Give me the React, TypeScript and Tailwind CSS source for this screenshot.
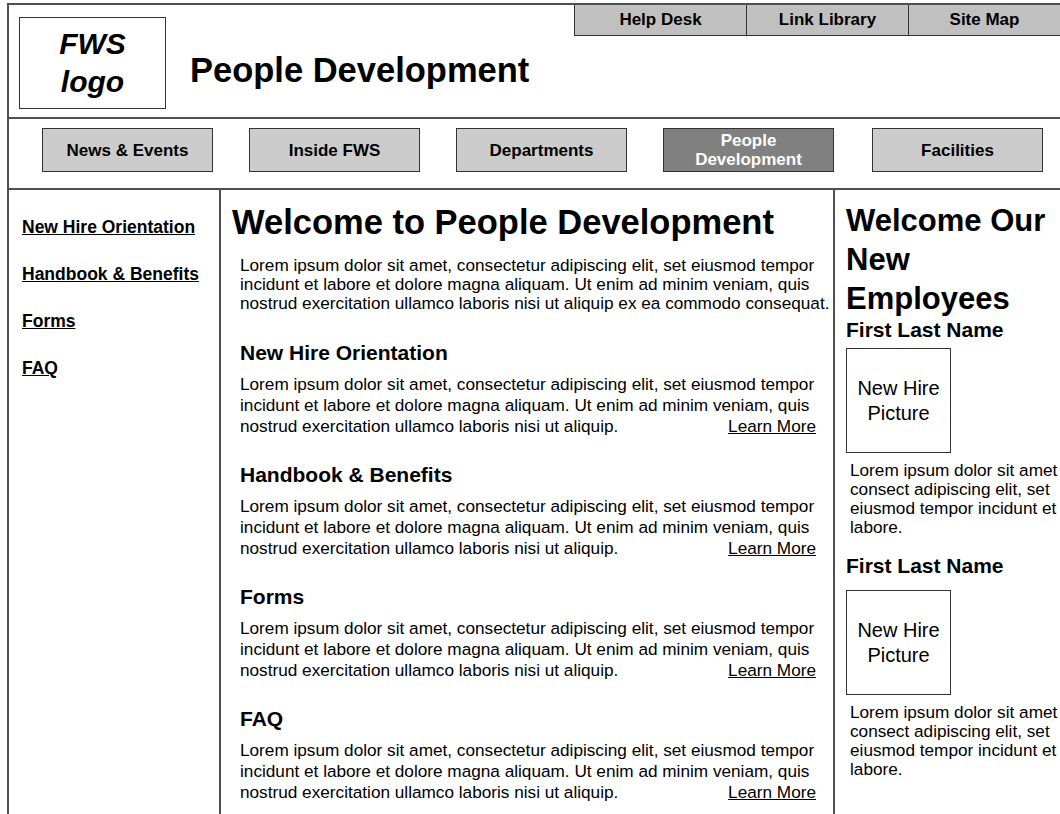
import React from 'react';

const topLinks = [
  { label: 'Help Desk', w: 'w-[171px]' },
  { label: 'Link Library', w: 'w-[162px]' },
  { label: 'Site Map', w: 'flex-1' },
];

const navItems = ['News & Events', 'Inside FWS', 'Departments', 'People Development', 'Facilities'];

const sideLinks = ['New Hire Orientation', 'Handbook & Benefits', 'Forms', 'FAQ'];

const sections = ['New Hire Orientation', 'Handbook & Benefits', 'Forms', 'FAQ'];

const lorem = [
  'Lorem ipsum dolor sit amet, consectetur adipiscing elit, set eiusmod tempor',
  'incidunt et labore et dolore magna aliquam. Ut enim ad minim veniam, quis',
];

const NewHire = ({ first }: { first?: boolean }) => (
  <div className={first ? '' : 'mt-[17px]'}>
    <h3 className="text-[21px] font-bold leading-[24px]">First Last Name</h3>
    <div
      className={`${first ? 'mt-[6px]' : 'mt-[12px]'} flex h-[105px] w-[105px] items-center justify-center border border-[#333] text-center text-[20px] leading-[25px]`}
    >
      New Hire
      <br />
      Picture
    </div>
    <p className="mt-[8px] whitespace-nowrap pl-[4px] text-[17.2px] leading-[19px]">
      Lorem ipsum dolor sit amet
      <br />
      consect adipiscing elit, set
      <br />
      eiusmod tempor incidunt et
      <br />
      labore.
    </p>
  </div>
);

export default function App() {
  return (
    <div className="min-h-screen overflow-hidden bg-white font-['Liberation_Sans',Arial,sans-serif] text-black">
      <div className="ml-[7px] mt-[3px] border-l-2 border-t-2 border-[#505050]">
        {/* header: logo, site title, utility tabs */}
        <header className="flex h-[114px] items-start border-b-2 border-[#505050]">
          <div className="ml-[10px] mt-[12px] flex h-[92px] w-[147px] shrink-0 items-center justify-center border border-[#333] text-center text-[30px] font-bold italic leading-[38px]">
            FWS
            <br />
            logo
          </div>
          <h1 className="ml-[24px] mt-[45px] whitespace-nowrap text-[34.5px] font-bold leading-[40px]">
            People Development
          </h1>
          <div className="ml-auto flex h-[31px] w-[486px] border-b border-l border-[#333] bg-[#c0c0c0]">
            {topLinks.map((t, i) => (
              <div
                key={t.label}
                className={`${t.w} flex items-center justify-center text-[17px] font-bold ${i > 0 ? 'border-l border-[#333]' : ''}`}
              >
                {t.label}
              </div>
            ))}
          </div>
        </header>

        {/* main navigation */}
        <nav className="flex h-[71px] gap-[36px] border-b-2 border-[#505050] pl-[33px] pt-[9px]">
          {navItems.map((n) => {
            const active = n === 'People Development';
            return (
              <div
                key={n}
                className={`flex h-[44px] w-[171px] items-center justify-center border border-[#333] text-center text-[17px] font-bold leading-[19px] ${
                  active ? 'bg-[#808080] px-[40px] text-white' : 'bg-[#cccccc]'
                } ${n === 'Facilities' ? 'ml-[2px]' : ''}`}
              >
                {n}
              </div>
            );
          })}
        </nav>

        <div className="flex">
          {/* left rail */}
          <aside className="min-h-[640px] w-[212px] shrink-0 border-r-2 border-[#505050] pl-[13px] pt-[26px]">
            <ul className="flex flex-col gap-[23px]">
              {sideLinks.map((l) => (
                <li key={l}>
                  <a className="whitespace-nowrap text-[17.5px] font-bold leading-[20px] underline">{l}</a>
                </li>
              ))}
            </ul>
          </aside>

          {/* content */}
          <main className="w-[614px] shrink-0 border-r-2 border-[#505050] pt-[12px]">
            <h2 className="whitespace-nowrap pl-[11px] text-[34.5px] font-bold leading-[40px]">
              Welcome to People Development
            </h2>
            <p className="mt-[14px] whitespace-nowrap pl-[19px] text-[17.2px] leading-[19px]">
              {lorem[0]}
              <br />
              {lorem[1]}
              <br />
              nostrud exercitation ullamco laboris nisi ut aliquip ex ea commodo consequat.
            </p>
            <div className="mt-[27px] flex flex-col gap-[25px] pl-[19px]">
              {sections.map((s) => (
                <section key={s}>
                  <h3 className="text-[21px] font-bold leading-[26px]">{s}</h3>
                  <div className="mt-[8px] w-[576px] whitespace-nowrap text-[17.2px] leading-[21px]">
                    <div>{lorem[0]}</div>
                    <div>{lorem[1]}</div>
                    <div className="flex justify-between">
                      <span>nostrud exercitation ullamco laboris nisi ut aliquip.</span>
                      <a className="underline">Learn More</a>
                    </div>
                  </div>
                </section>
              ))}
            </div>
          </main>

          {/* new employees */}
          <aside className="flex-1 pl-[11px] pt-[11px]">
            <h2 className="text-[31px] font-bold leading-[39px]">
              Welcome Our
              <br />
              New
              <br />
              Employees
            </h2>
            <NewHire first />
            <NewHire />
          </aside>
        </div>
      </div>
    </div>
  );
}
